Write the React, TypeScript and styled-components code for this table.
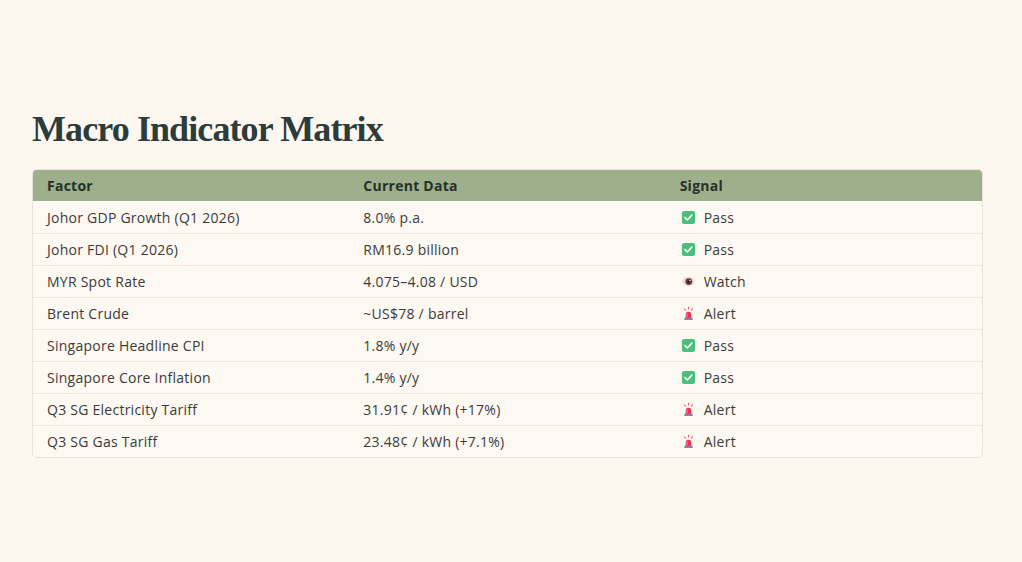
import React from 'react';
import styled, { createGlobalStyle } from 'styled-components';

const GlobalStyle = createGlobalStyle`
  body {
    margin: 0;
    background: #fef7f0;
    font-family: "Open Sans", "Liberation Sans", sans-serif;
    color: #3b3b3b;
  }
`;

const Page = styled.div`
  padding: 107px 39px 0 32px;
`;

const Title = styled.h1`
  font: 700 36px/44px "Liberation Serif", serif;
  letter-spacing: -0.025em;
  color: #2b3c3c;
  margin: 0 0 18px;
`;

const Table = styled.div`
  border: 1px solid #ebe3da;
  border-radius: 5px;
  overflow: hidden;
  background: #fdf8f2;
`;

const Row = styled.div<{ $head?: boolean }>`
  display: grid;
  grid-template-columns: repeat(3, 1fr);
  height: ${p => (p.$head ? '31px' : '32px')};
  align-items: center;
  background: ${p => (p.$head ? '#9eb08b' : 'transparent')};
  border-top: ${p => (p.$head ? 'none' : '1px solid #efe7de')};
  box-sizing: border-box;
  &:nth-child(2) {
    border-top: none;
  }
`;

const Cell = styled.div<{ $head?: boolean }>`
  padding-left: 14px;
  font-size: 14px;
  letter-spacing: 0.25px;
  font-weight: ${p => (p.$head ? 700 : 400)};
  color: ${p => (p.$head ? '#26302b' : '#3b3b3b')};
  display: flex;
  align-items: center;
  gap: 8px;
  white-space: nowrap;
`;

const Icon = styled.svg`
  width: 15px;
  height: 15px;
  flex: none;
  margin-left: 1px;
`;

type Signal = 'Pass' | 'Watch' | 'Alert';

const CheckIcon = () => (
  <Icon viewBox="0 0 16 16">
    <rect x="1" y="1" width="14" height="14" rx="2.5" fill="#4cc07a" />
    <path d="M4.3 8.2l2.4 2.4 5-5.2" fill="none" stroke="#fff" strokeWidth="1.7" strokeLinecap="round" strokeLinejoin="round" />
  </Icon>
);

const EyeIcon = () => (
  <Icon viewBox="0 0 16 16">
    <ellipse cx="8" cy="8" rx="6.5" ry="5" fill="#e7dcd8" />
    <circle cx="8.3" cy="8" r="3.6" fill="#6b3c3c" />
    <circle cx="8.3" cy="8" r="1.6" fill="#2a1a1a" />
    <circle cx="9.4" cy="6.8" r="0.8" fill="#fff" />
  </Icon>
);

const AlertIcon = () => (
  <Icon viewBox="0 0 16 16">
    <path d="M8 1.2v2M3.6 3l1.2 1.5M12.4 3l-1.2 1.5" stroke="#f25c6b" strokeWidth="1.1" strokeLinecap="round" />
    <path d="M5 13V9a3 3 0 016 0v4z" fill="#e8344f" />
    <path d="M6.3 12V9.3a1.5 1.5 0 011.4-1.5" stroke="#ff9fb0" strokeWidth="0.9" fill="none" />
    <rect x="3.5" y="12.6" width="9" height="2.4" rx="0.6" fill="#8a7fa6" />
  </Icon>
);

const SignalIcon = ({ signal }: { signal: Signal }) => {
  if (signal === 'Pass') return <CheckIcon />;
  if (signal === 'Watch') return <EyeIcon />;
  return <AlertIcon />;
};

const rows: [string, string, Signal][] = [
  ['Johor GDP Growth (Q1 2026)', '8.0% p.a.', 'Pass'],
  ['Johor FDI (Q1 2026)', 'RM16.9 billion', 'Pass'],
  ['MYR Spot Rate', '4.075–4.08 / USD', 'Watch'],
  ['Brent Crude', '~US$78 / barrel', 'Alert'],
  ['Singapore Headline CPI', '1.8% y/y', 'Pass'],
  ['Singapore Core Inflation', '1.4% y/y', 'Pass'],
  ['Q3 SG Electricity Tariff', '31.91¢ / kWh (+17%)', 'Alert'],
  ['Q3 SG Gas Tariff', '23.48¢ / kWh (+7.1%)', 'Alert'],
];

const App: React.FC = () => {
  return (
    <Page>
      <GlobalStyle />
      <Title>Macro Indicator Matrix</Title>
      <Table>
        <Row $head>
          <Cell $head>Factor</Cell>
          <Cell $head>Current Data</Cell>
          <Cell $head>Signal</Cell>
        </Row>
        {rows.map(([factor, data, signal]) => (
          <Row key={factor}>
            <Cell>{factor}</Cell>
            <Cell>{data}</Cell>
            <Cell>
              <SignalIcon signal={signal} />
              {signal}
            </Cell>
          </Row>
        ))}
      </Table>
    </Page>
  );
};

export default App;
